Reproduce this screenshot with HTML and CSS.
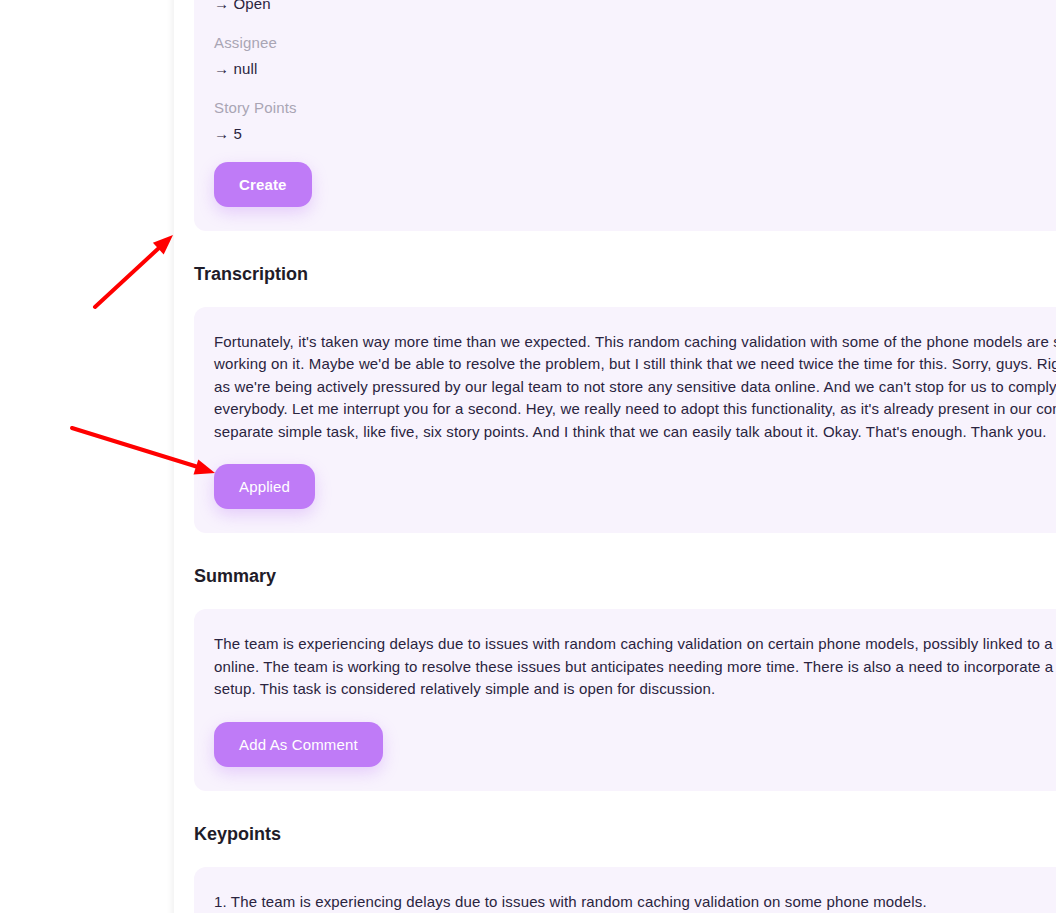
FILE: index.html
```html
<!DOCTYPE html>
<html lang="en">
<head>
<meta charset="utf-8">
<title>Meeting Result</title>
<link rel="stylesheet" href="styles.css">
</head>
<body>
<div class="page">
  <aside class="side"></aside>
  <main class="panel">
    <section class="card">
      <div class="fields">
        <div class="field">
          <div class="field-label">Status</div>
          <div class="field-value">→ Open</div>
        </div>
        <div class="field">
          <div class="field-label">Assignee</div>
          <div class="field-value">→ null</div>
        </div>
        <div class="field">
          <div class="field-label">Story Points</div>
          <div class="field-value">→ 5</div>
        </div>
      </div>
      <button class="btn btn-bold">Create</button>
    </section>

    <h2 class="section-title">Transcription</h2>
    <section class="card">
      <p class="card-text">Fortunately, it's taken way more time than we expected. This random caching validation with some of the phone models are still failing, we're<br>working on it. Maybe we'd be able to resolve the problem, but I still think that we need twice the time for this. Sorry, guys. Right, the privacy part is urgent<br>as we're being actively pressured by our legal team to not store any sensitive data online. And we can't stop for us to comply, thanks<br>everybody. Let me interrupt you for a second. Hey, we really need to adopt this functionality, as it's already present in our competitors' app, a<br>separate simple task, like five, six story points. And I think that we can easily talk about it. Okay. That's enough. Thank you.</p>
      <button class="btn">Applied</button>
    </section>

    <h2 class="section-title">Summary</h2>
    <section class="card">
      <p class="card-text">The team is experiencing delays due to issues with random caching validation on certain phone models, possibly linked to a recent change<br>online. The team is working to resolve these issues but anticipates needing more time. There is also a need to incorporate a new feature in the<br>setup. This task is considered relatively simple and is open for discussion.</p>
      <button class="btn">Add As Comment</button>
    </section>

    <h2 class="section-title">Keypoints</h2>
    <section class="card">
      <p class="card-text">1. The team is experiencing delays due to issues with random caching validation on some phone models.<br>2. The team anticipates needing twice the estimated time to resolve the problem.</p>
    </section>
  </main>
</div>

<svg class="annotations" width="1056" height="913" viewBox="0 0 1056 913" aria-hidden="true">
  <g stroke="#ff0000" stroke-width="4" stroke-linecap="round" fill="#ff0000">
    <line x1="95" y1="307" x2="160" y2="247"/>
    <polygon points="173,235 163.7,254.5 152.9,242.7" stroke="none"/>
    <line x1="72" y1="428" x2="198" y2="467"/>
    <polygon points="215,473 193.5,474.6 198.3,459.4" stroke="none"/>
  </g>
</svg>
</body>
</html>
```

FILE: styles.css
```css
html, body {
  margin: 0;
  padding: 0;
  background: #ffffff;
  overflow: hidden;
}

body {
  font-family: "Liberation Sans", Arial, sans-serif;
  letter-spacing: 0.15px;
  color: #2a2440;
  position: relative;
  width: 1056px;
  height: 913px;
}

.page {
  display: flex;
  align-items: flex-start;
  margin-top: -57px;
}

.side {
  flex: none;
  width: 174px;
}

.panel {
  flex: none;
  width: 1400px;
  padding: 0 20px 40px;
  background: #ffffff;
  box-shadow: -3px 0 5px rgba(0, 0, 0, 0.05);
  min-height: 1100px;
}

.card {
  background: #f8f3fd;
  border-radius: 12px;
  padding: 24px 20px;
  display: flex;
  flex-direction: column;
  align-items: flex-start;
}

.fields {
  display: flex;
  flex-direction: column;
  gap: 16.5px;
  margin-bottom: 16px;
}

.field {
  display: flex;
  flex-direction: column;
  gap: 3.5px;
}

.field-label {
  font-size: 15px;
  line-height: 22.5px;
  color: #a9a5b4;
}

.field-value {
  font-size: 15px;
  line-height: 22.5px;
  color: #2a2440;
}

.card-text {
  margin: 0 0 21px;
  font-size: 15px;
  line-height: 22.5px;
  color: #2a2440;
  white-space: nowrap;
}

.card-text:last-child {
  margin-bottom: 0;
}

.section-title {
  margin: 32px 0 22px;
  font-size: 18px;
  line-height: 22px;
  font-weight: 600;
  letter-spacing: 0;
  color: #1f1c29;
}

.btn {
  height: 45px;
  padding: 0 25px;
  border: none;
  border-radius: 14px;
  background: #bf7bf7;
  color: #ffffff;
  font-family: inherit;
  font-size: 15px;
  font-weight: 400;
  letter-spacing: 0.15px;
  box-shadow: 0 6px 16px rgba(191, 123, 247, 0.32);
  cursor: pointer;
}

.btn-bold {
  font-weight: 700;
}

.annotations {
  position: absolute;
  left: 0;
  top: 0;
  pointer-events: none;
}
```
